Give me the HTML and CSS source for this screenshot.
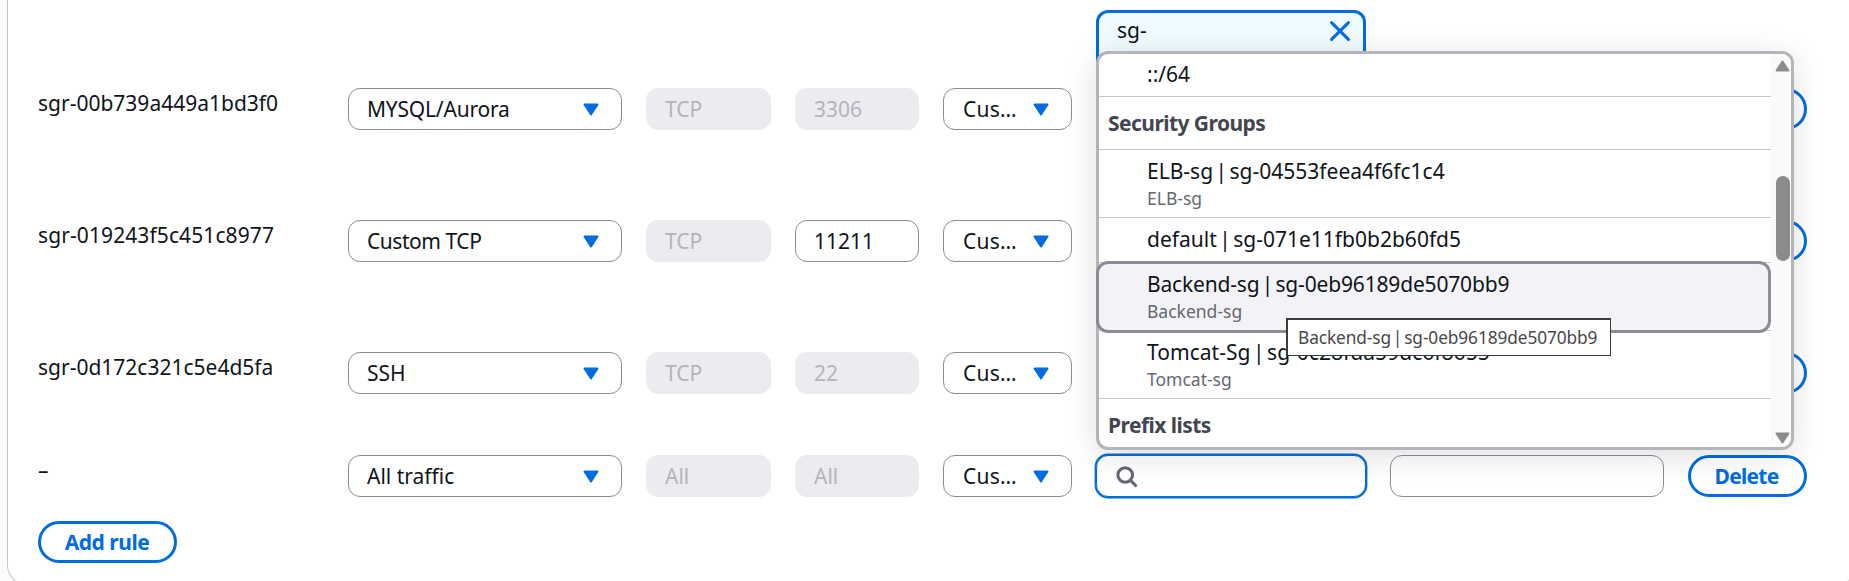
FILE: index.html
```
<!DOCTYPE html>
<html lang="en">
<head>
<meta charset="utf-8">
<title>Edit inbound rules</title>
<link rel="stylesheet" href="styles.css">
</head>
<body>
<svg width="0" height="0" class="defs">
  <symbol id="caret" viewBox="0 0 16 13"><path d="M1.5 1.5h13L8 11.5z" fill="currentColor" stroke="currentColor" stroke-width="2" stroke-linejoin="round"/></symbol>
</svg>
<main class="panel">
  <div class="row row-first">
    <div class="source">
      <div class="token">
        <span>sg-</span>
        <svg class="close" viewBox="0 0 20 20"><path d="M1.6 1.6l16.8 16.8M18.4 1.6L1.6 18.4" fill="none" stroke="currentColor" stroke-width="3" stroke-linecap="round"/></svg>
      </div>
    </div>
  </div>
  <div class="row">
    <div class="rule-id">sgr-00b739a449a1bd3f0</div>
    <div class="field select"><span class="tight">MYSQL/Aurora</span><svg class="caret"><use href="#caret"/></svg></div>
    <div class="field disabled">TCP</div>
    <div class="field disabled">3306</div>
    <div class="field select small"><span>Cus…</span><svg class="caret"><use href="#caret"/></svg></div>
    <div class="field"></div>
    <div class="field"></div>
    <div class="button delete">Delete</div>
  </div>
  <div class="row">
    <div class="rule-id spaced">sgr-019243f5c451c8977</div>
    <div class="field select"><span class="tighter">Custom TCP</span><svg class="caret"><use href="#caret"/></svg></div>
    <div class="field disabled">TCP</div>
    <div class="field">11211</div>
    <div class="field select small"><span>Cus…</span><svg class="caret"><use href="#caret"/></svg></div>
    <div class="field"></div>
    <div class="field"></div>
    <div class="button delete">Delete</div>
  </div>
  <div class="row row-short">
    <div class="rule-id">sgr-0d172c321c5e4d5fa</div>
    <div class="field select"><span>SSH</span><svg class="caret"><use href="#caret"/></svg></div>
    <div class="field disabled">TCP</div>
    <div class="field disabled">22</div>
    <div class="field select small"><span>Cus…</span><svg class="caret"><use href="#caret"/></svg></div>
    <div class="field"></div>
    <div class="field"></div>
    <div class="button delete">Delete</div>
  </div>
  <div class="row row-last">
    <div class="rule-id">–</div>
    <div class="field select"><span>All traffic</span><svg class="caret"><use href="#caret"/></svg></div>
    <div class="field disabled">All</div>
    <div class="field disabled">All</div>
    <div class="field select small"><span>Cus…</span><svg class="caret"><use href="#caret"/></svg></div>
    <div class="source">
      <div class="field focused">
        <svg class="search" viewBox="0 0 22 22"><circle cx="9.2" cy="9" r="7.3" fill="none" stroke="currentColor" stroke-width="3"/><path d="M14.3 14.1l6.2 6.4" stroke="currentColor" stroke-width="3"/></svg>
      </div>
      <div class="dropdown">
        <div class="options">
          <div class="option first"><div class="label">::/64</div></div>
          <div class="group">Security Groups</div>
          <div class="option"><div class="label">ELB-sg | sg-04553feea4f6fc1c4</div><div class="desc">ELB-sg</div></div>
          <div class="option single"><div class="label">default | sg-071e11fb0b2b60fd5</div></div>
          <div class="option active">
            <div class="highlight">
              <div class="label wide">Backend-sg | sg-0eb96189de5070bb9</div><div class="desc">Backend-sg</div>
              <div class="tooltip">Backend-sg | sg-0eb96189de5070bb9</div>
            </div>
          </div>
          <div class="option"><div class="label loose">Tomcat-Sg | sg-0c28fda59dc6f8655</div><div class="desc">Tomcat-sg</div></div>
          <div class="group last">Prefix lists</div>
        </div>
        <div class="scrollbar">
          <svg class="arrow up"><use href="#caret"/></svg>
          <div class="thumb"></div>
          <svg class="arrow down"><use href="#caret"/></svg>
        </div>
      </div>
    </div>
    <div class="field"></div>
    <div class="button delete">Delete</div>
  </div>
  <div class="button add">Add rule</div>
</main>
</body>
</html>
```
FILE: styles.css
```
* { box-sizing: border-box; }

html, body { height: 100%; overflow: hidden; }

body {
  margin: 0;
  padding-left: 7px;
  background: #fbfbfb;
  color: #0f141a;
  font: 21px/28px "Noto Sans", sans-serif;
}

.defs { position: absolute; }

.panel {
  width: 1850px;
  height: 585px;
  padding-left: 30px;
  background: #fff;
  border: 1px solid #c6c6cd;
  border-top: 0;
  border-radius: 0 0 20px 20px;
}

.row {
  display: grid;
  grid-template-columns: 286px 274px 125px 124px 129px 270px 274px 119px;
  column-gap: 24px;
  align-items: start;
  height: 132px;
}

.row-first { height: 88px; padding-top: 10px; }
.row-first .source { grid-column: 6; }
.row-short { height: 103px; }
.row-last { height: 66px; }

.rule-id { line-height: 30px; }
.spaced { letter-spacing: 0.1px; }
.tight { letter-spacing: -0.2px; }
.tighter { letter-spacing: -0.45px; }

.field {
  display: flex;
  align-items: center;
  height: 42px;
  padding: 0 18px;
  border: 1px solid #8c8c94;
  border-radius: 12px;
  background: #fff;
}

.select { justify-content: space-between; padding-right: 22px; }

.select.small { padding-left: 19px; letter-spacing: 0.25px; }

.caret {
  width: 16px;
  height: 13px;
  color: #006ce0;
}

.disabled {
  background: #ebebf0;
  border-color: #ebebf0;
  color: #b4b4bb;
}

.source { position: relative; }

.token {
  display: flex;
  justify-content: space-between;
  height: 72px;
  padding: 3px 13px 0 18px;
  border: 3px solid #006ce0;
  border-radius: 12px;
  background: #f0fbff;
}

.close {
  width: 20px;
  height: 20px;
  margin-top: 5px;
  color: #006ce0;
}

.focused {
  border-color: #006ce0;
  box-shadow: 0 0 0 1.4px #006ce0;
}

.search {
  width: 22px;
  height: 22px;
  margin: 1px 0 0 1px;
  color: #656871;
}

.button {
  display: flex;
  align-items: center;
  justify-content: center;
  height: 42px;
  border: 3px solid #006ce0;
  border-radius: 21px;
  color: #006ce0;
  font-weight: 700;
}

.delete { padding-right: 2px; letter-spacing: -0.75px; }
.add { width: 139px; padding-right: 1px; letter-spacing: -0.5px; }

/* Suggestion list, opened upwards from the search field */
.dropdown {
  position: absolute;
  left: 0;
  bottom: 47px;
  z-index: 2;
  display: flex;
  width: 698px;
  height: 399px;
  border: 3px solid #b4b4bb;
  border-radius: 12px;
  background: #fff;
  box-shadow: 0 6px 30px 1px rgba(0, 7, 22, 0.12);
}

.options { width: 672px; }

.option {
  display: flow-root;
  height: 68px;
  padding: 6px 0 0 48px;
  border-bottom: 1px solid #c6c6cd;
}

.option.first { height: 43px; padding-top: 5px; }
.option.single { height: 45px; }
.option.active { padding: 0; }

.label { line-height: 31px; word-spacing: -3px; white-space: nowrap; }
.label.wide { letter-spacing: -0.17px; }
.label.loose { letter-spacing: 0.03px; }

.desc {
  color: #656871;
  font-size: 17.5px;
  line-height: 23px;
}

.group {
  height: 53px;
  padding: 11px 0 0 9px;
  border-bottom: 1px solid #c6c6cd;
  color: #424650;
  font-weight: 700;
  line-height: 31px;
  letter-spacing: -0.55px;
}

.group.last { height: 48px; border-bottom: 0; }

.highlight {
  position: relative;
  z-index: 1;
  width: 675px;
  height: 72px;
  margin: -2px 0 0 -3px;
  padding: 5px 0 0 48px;
  border: 3px solid #8c8c94;
  border-radius: 12px;
  background: #f3f3f7;
}

.tooltip {
  position: absolute;
  left: 187px;
  top: 54px;
  width: 325px;
  height: 38px;
  padding-left: 10px;
  border: solid #3b3b3f;
  border-width: 2px 1px 1px 2px;
  background: #fff;
  color: #484848;
  font-size: 17.3px;
  line-height: 35px;
  letter-spacing: -0.1px;
  word-spacing: -2.5px;
  white-space: nowrap;
}

.scrollbar {
  display: flex;
  flex-direction: column;
  align-items: center;
  width: 20px;
  padding: 6px 1px 3px 4px;
  border-radius: 0 9px 9px 0;
  background: #fafafa;
}

.arrow { width: 15px; height: 12px; color: #8b8b8b; }
.arrow.up { transform: rotate(180deg); }
.arrow.down { margin-top: auto; }

.thumb {
  width: 14px;
  height: 85px;
  margin-top: 104px;
  border-radius: 7px;
  background: #8b8b8b;
}
```
